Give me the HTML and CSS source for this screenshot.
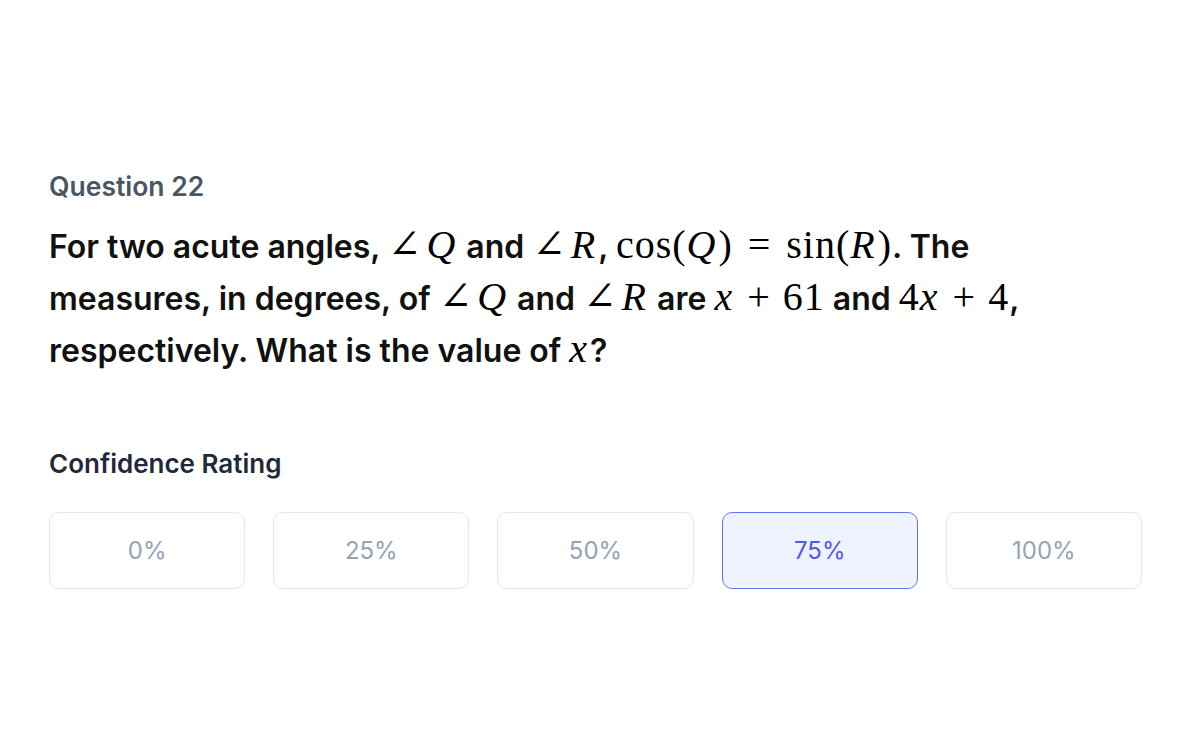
FILE: index.html
```html
<!DOCTYPE html>
<html>
<head>
<meta charset="utf-8">
<link rel="stylesheet" href="styles.css">
</head>
<body>
<main class="page">
  <section class="question">
    <h2 class="q-label">Question 22</h2>
    <p class="q-text">For two acute angles, <span class="m"><span class="ang">∠</span><i>Q</i></span> and <span class="m"><span class="ang">∠</span><i>R</i></span>, <span class="m">cos(<i>Q</i>)<span class="rel">=</span>sin(<i>R</i>)</span>. The measures, in degrees, of <span class="m"><span class="ang">∠</span><i>Q</i></span> and <span class="m"><span class="ang">∠</span><i>R</i></span> are <span class="m"><i>x</i><span class="op">+</span>61</span> and <span class="m">4<i>x</i><span class="op">+</span>4</span>, respectively. What is the value of <span class="m"><i>x</i></span>?</p>
  </section>
  <section class="confidence">
    <h3 class="c-label">Confidence Rating</h3>
    <div class="options">
      <button class="opt">0%</button>
      <button class="opt">25%</button>
      <button class="opt">50%</button>
      <button class="opt selected">75%</button>
      <button class="opt">100%</button>
    </div>
  </section>
</main>
</body>
</html>
```

FILE: styles.css
```css
* { box-sizing: border-box; }
html, body { margin: 0; padding: 0; background: #ffffff; }
body { font-family: Inter, "Liberation Sans", sans-serif; }
.page {
  width: 1093px;
  margin-left: 49px;
  padding-top: 168px;
}
.q-label {
  margin: 0;
  font-family: Inter, sans-serif;
  font-size: 26.5px;
  font-weight: 600;
  color: #4b5563;
  line-height: 36px;
}
.q-text {
  margin: 17px 0 0 0;
  font-family: Inter, sans-serif;
  font-size: 32px;
  font-weight: 600;
  color: #111111;
  line-height: 52px;
  width: 1000px;
}
.m {
  font-family: "Liberation Serif", "DejaVu Serif", serif;
  font-weight: 400;
  font-size: 40px;
  line-height: 0;
  color: #000;
  letter-spacing: 1px;
}
.m i { font-style: italic; padding-right: 2px; }
.ang { margin-right: 4px; }
.op { margin: 0 12px; }
.rel { margin: 0 15px; }
.confidence { margin-top: 69px; }
.c-label {
  margin: 0;
  font-family: Inter, sans-serif;
  font-size: 26px;
  font-weight: 600;
  color: #1f2937;
  line-height: 36px;
}
.options {
  margin-top: 30px;
  display: grid;
  grid-template-columns: repeat(5, 1fr);
  gap: 28px;
}
.opt {
  height: 77px;
  border: 1.5px solid #e2e8f0;
  border-radius: 10px;
  background: #ffffff;
  font-family: Inter, sans-serif;
  font-size: 24px;
  color: #94a3b8;
  font-weight: 400;
  padding: 0;
}
.opt.selected {
  border-color: #6374f1;
  background: #eff2ff;
  color: #4f5ae5;
}
```
